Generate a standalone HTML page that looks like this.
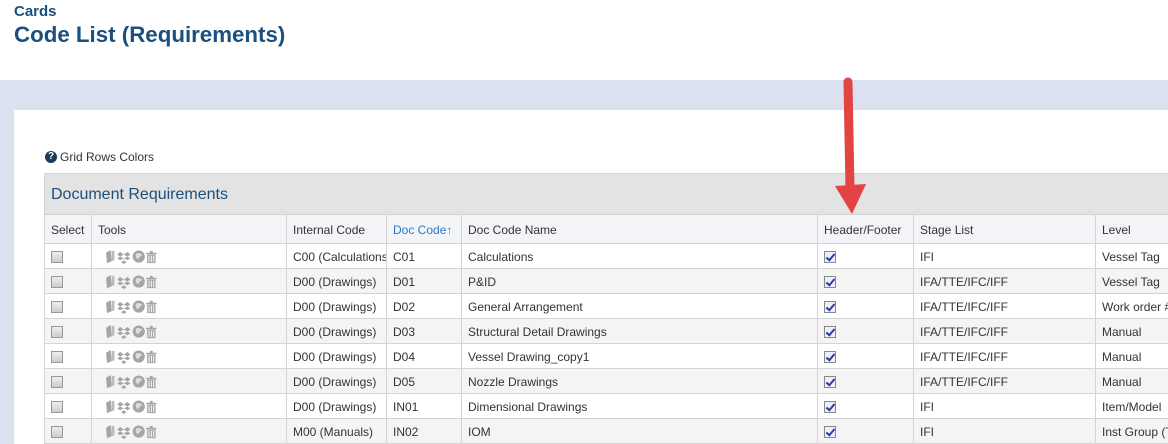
<!DOCTYPE html>
<html><head><style>
body{margin:0;width:1168px;height:444px;overflow:hidden;background:#fff;font-family:"Liberation Sans",sans-serif;position:relative}
.t1{position:absolute;left:14px;top:3px;font-size:15px;font-weight:bold;color:#1b4f7e}
.t2{position:absolute;left:14px;top:22px;font-size:22.3px;font-weight:bold;color:#1b4f7e}
.band{position:absolute;left:0;top:80px;width:1168px;height:364px;background:#dbe1ee}
.panel{position:absolute;left:14px;top:110px;width:1154px;height:334px;background:#fff}
.grc{position:absolute;left:45px;top:150px;font-size:12px;color:#333;line-height:14px}
.q{display:inline-block;width:12px;height:12px;border-radius:50%;background:#1b3a5c;color:#fff;font-size:10px;font-weight:bold;text-align:center;line-height:12px;vertical-align:top;margin-right:3px;margin-top:1px}
table{position:absolute;left:44px;top:173px;border-collapse:collapse;font-size:12px;color:#333;table-layout:fixed;width:1140px}
td,th{border:1px solid #d4d4d4;padding:1px 6px 0;white-space:nowrap;overflow:hidden;height:23px;line-height:14px;font-weight:normal;text-align:left}
.cap td{height:39px;background:#e3e3e3;font-size:16px;color:#1b4f7e;padding-left:6px}
.hd th{height:26px;background:#f2f4f8;padding-top:2px}
tr.g td{background:#f4f4f4}
.cb{display:inline-block;width:10px;height:10px;border:1px solid #999;background:linear-gradient(#eee,#ccc);vertical-align:middle}
.ck{display:inline-block;width:10px;height:10px;border:1px solid #888;background:#eef;vertical-align:middle;position:relative}
.ck:after{content:"";position:absolute;left:3px;top:0;width:3px;height:7px;border:solid #2a3f9a;border-width:0 2px 2px 0;transform:rotate(40deg)}
.ic{padding-left:10px}
.ic svg{vertical-align:middle;display:inline-block}
</style></head><body>
<div class="t1">Cards</div>
<div class="t2">Code List (Requirements)</div>
<div class="band"></div>
<div class="panel"></div>
<div class="grc"><span class="q">?</span>Grid Rows Colors</div>
<table>
<colgroup><col style="width:47px"><col style="width:195px"><col style="width:100px"><col style="width:75px"><col style="width:356px"><col style="width:96px"><col style="width:182px"><col style="width:89px"></colgroup>
<tr class="cap"><td colspan="8">Document Requirements</td></tr>
<tr class="hd"><th>Select</th><th>Tools</th><th>Internal Code</th><th style="color:#2a7ac8">Doc Code↑</th><th>Doc Code Name</th><th>Header/Footer</th><th>Stage List</th><th>Level</th></tr>
<tr><td><i class="cb"></i></td><td class="ic">ICONS</td><td>C00 (Calculations)</td><td>C01</td><td>Calculations</td><td><i class="ck"></i></td><td>IFI</td><td>Vessel Tag</td></tr>
<tr class="g"><td><i class="cb"></i></td><td class="ic">ICONS</td><td>D00 (Drawings)</td><td>D01</td><td>P&amp;ID</td><td><i class="ck"></i></td><td>IFA/TTE/IFC/IFF</td><td>Vessel Tag</td></tr>
<tr><td><i class="cb"></i></td><td class="ic">ICONS</td><td>D00 (Drawings)</td><td>D02</td><td>General Arrangement</td><td><i class="ck"></i></td><td>IFA/TTE/IFC/IFF</td><td>Work order #</td></tr>
<tr class="g"><td><i class="cb"></i></td><td class="ic">ICONS</td><td>D00 (Drawings)</td><td>D03</td><td>Structural Detail Drawings</td><td><i class="ck"></i></td><td>IFA/TTE/IFC/IFF</td><td>Manual</td></tr>
<tr><td><i class="cb"></i></td><td class="ic">ICONS</td><td>D00 (Drawings)</td><td>D04</td><td>Vessel Drawing_copy1</td><td><i class="ck"></i></td><td>IFA/TTE/IFC/IFF</td><td>Manual</td></tr>
<tr class="g"><td><i class="cb"></i></td><td class="ic">ICONS</td><td>D00 (Drawings)</td><td>D05</td><td>Nozzle Drawings</td><td><i class="ck"></i></td><td>IFA/TTE/IFC/IFF</td><td>Manual</td></tr>
<tr><td><i class="cb"></i></td><td class="ic">ICONS</td><td>D00 (Drawings)</td><td>IN01</td><td>Dimensional Drawings</td><td><i class="ck"></i></td><td>IFI</td><td>Item/Model</td></tr>
<tr class="g"><td><i class="cb"></i></td><td class="ic">ICONS</td><td>M00 (Manuals)</td><td>IN02</td><td>IOM</td><td><i class="ck"></i></td><td>IFI</td><td>Inst Group (T</td></tr>
</table>
<svg style="position:absolute;left:0;top:0" width="1168" height="444">
<path d="M848 82 L850 190" stroke="#e24444" stroke-width="9" stroke-linecap="round" fill="none"/>
<polygon points="835,186 866,184 852,214" fill="#e24444"/>
</svg>
<script>
var s='<svg width="66" height="14" viewBox="0 1 66 15"><g fill="#a5a5a5"><path d="M2 4 L7 1 L8 13 L3 15 Z"/><path d="M8 2 L11 2 L11 12 L8 13 Z" fill="#bbb"/><path d="M17 3 L21 6 L17 8 L14 6 Z M25 3 L28 6 L25 8 L21 6 Z M17 8 L21 10 L17 12 L14 10 Z M25 8 L28 10 L25 12 L21 10 Z M21 12 L24 14 L21 16 L18 14 Z"/><circle cx="37" cy="8" r="6.5"/><path d="M45 4 H56 V5.5 H45 Z M49 2 H52 V4 H49 Z M46 6 H55 V15 H46 Z"/></g><g stroke="#fff" stroke-width="1"><path d="M48 7 V14 M50.5 7 V14 M53 7 V14"/></g><path d="M34 5 Q37 3 41 6 Q38 8 36 11 Q33 9 34 5Z" fill="#ddd"/></svg>';
document.querySelectorAll('.ic').forEach(function(e){e.innerHTML=s;});
</script>
</body></html>
